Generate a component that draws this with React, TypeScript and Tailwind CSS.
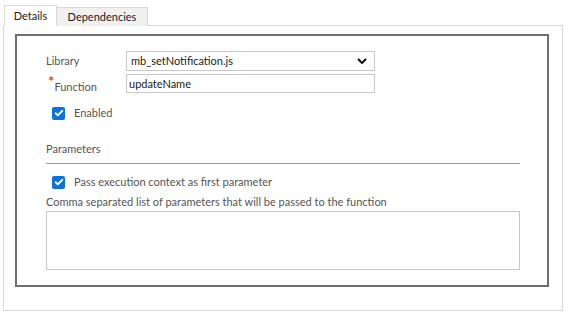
import React from "react";

function Check() {
  return (
    <span className="flex h-[13px] w-[13px] items-center justify-center rounded-[2px] bg-[#0a74da]">
      <svg viewBox="0 0 12 12" className="h-[10px] w-[10px]" fill="none" stroke="white" strokeWidth={2.2}>
        <path d="M2 6.3l2.6 2.6L10 3.3" strokeLinecap="round" strokeLinejoin="round" />
      </svg>
    </span>
  );
}

export default function App() {
  return (
    <div className="h-[317px] w-[574px] bg-white pl-[3px] pt-[5px] text-[11px] leading-[16px] text-[#333] [font-family:'Segoe_UI',Lato,sans-serif]">
      {/* Tabs */}
      <div className="relative z-10 flex h-[21px] items-end">
        <div className="ml-px flex h-[21px] w-[53px] items-center justify-center border border-b-0 border-[#d9d9d9] bg-white text-[#222]">
          Details
        </div>
        <div className="flex h-[19px] w-[91px] items-center justify-center border border-b-0 border-l-0 border-[#d9d9d9] bg-[#f0f0f0] text-[#222]">
          Dependencies
        </div>
      </div>

      {/* Panel */}
      <div className="-mt-px h-[286px] w-[560px] border border-[#d9d9d9] px-[11px] pt-[8px]">
        <div className="h-[253px] w-[534px] border-2 border-[#6f6f6f] pl-[29px] pt-[15px]">
          <div className="flex items-center">
            <span className="w-[80px] text-[#555]">Library</span>
            <div className="flex h-[20px] w-[249px] items-center justify-between border border-[#c8c8c8] pl-[4px] pr-[7px] text-[#222]">
              <span>mb_setNotification.js</span>
              <svg viewBox="0 0 10 6" className="h-[6px] w-[10px]" fill="none" stroke="#111" strokeWidth={2}>
                <path d="M1 1l4 4 4-4" />
              </svg>
            </div>
          </div>

          <div className="mt-[3px] flex items-center">
            <span className="w-[80px] pl-[2px] text-[#555]">
              <span className="relative -top-[2px] text-[15px] text-[#c00]">*</span>
              <span className="relative top-[2px]">Function</span>
            </span>
            <div className="flex h-[19px] w-[249px] items-center border border-[#c8c8c8] pl-[2px] text-[#222]">
              updateName
            </div>
          </div>

          <div className="mt-[12px] flex h-[16px] items-center pl-[6px]">
            <Check />
            <span className="ml-[9px] text-[#555]">Enabled</span>
          </div>

          <div className="mt-[20px] w-[474px] border-b border-[#9a9a9a] pb-[6px] text-[#555]">Parameters</div>

          <div className="mt-[10px] flex h-[16px] items-center pl-[6px]">
            <Check />
            <span className="ml-[9px] text-[#555]">Pass execution context as first parameter</span>
          </div>

          <div className="mt-[4px] text-[#555]">Comma separated list of parameters that will be passed to the function</div>
          <div className="mt-px h-[59px] w-[474px] border border-[#c8c8c8]"></div>
        </div>
      </div>
    </div>
  );
}
